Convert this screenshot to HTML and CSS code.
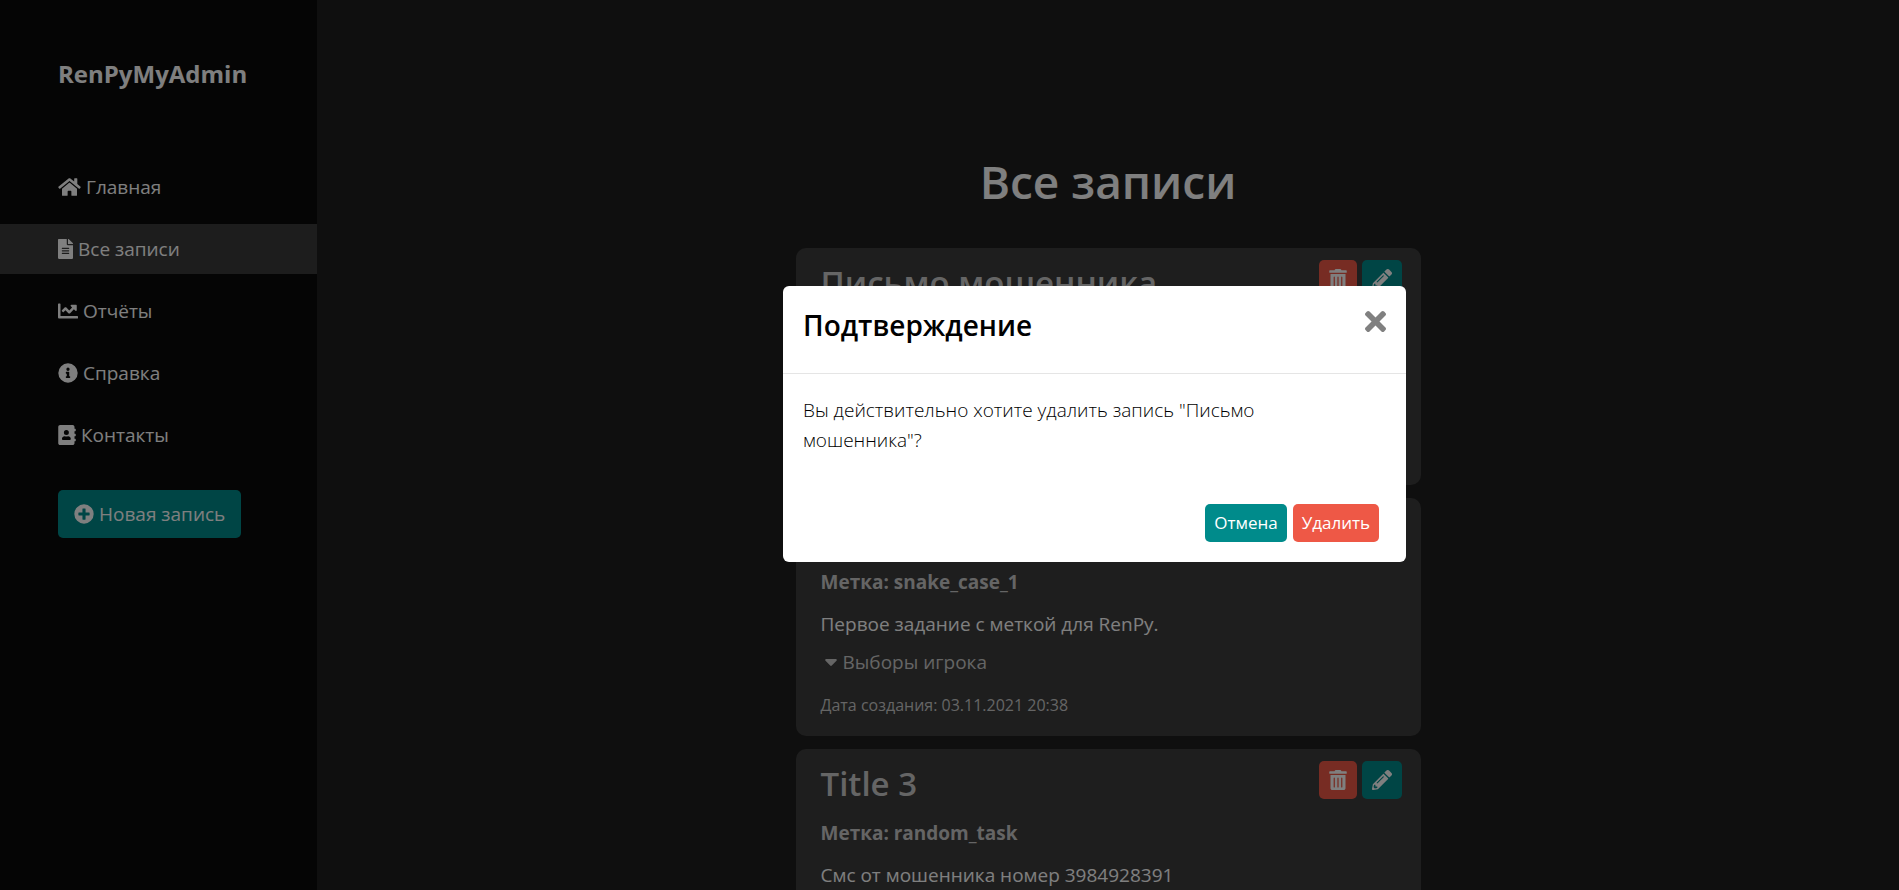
FILE: index.html
```html
<!DOCTYPE html>
<html lang="ru">
<head>
<meta charset="utf-8">
<title>RenPyMyAdmin</title>
<link rel="stylesheet" href="styles.css">
</head>
<body>
<svg class="sprite" aria-hidden="true">
  <symbol id="home" viewBox="0 0 576 512"><path d="M280 148 96 300v164c0 9 7 16 16 16h112c9 0 16-7 16-16v-96c0-9 7-16 16-16h64c9 0 16 7 16 16v96c0 9 7 16 16 16h112c9 0 16-7 16-16V300L296 148c-5-4-11-4-16 0zM572 251l-84-69V44c0-7-5-12-12-12h-56c-7 0-12 5-12 12v73l-90-74c-18-14-43-14-61 0L4 251c-5 4-5 12-1 17l26 31c4 5 12 6 17 2l235-194c4-4 11-4 15 0l235 194c5 4 12 3 17-2l25-31c5-5 4-13-1-17z"/></symbol>
  <symbol id="file" viewBox="0 0 384 512"><path fill-rule="evenodd" d="M224 136V0H24C11 0 0 11 0 24v464c0 13 11 24 24 24h336c13 0 24-11 24-24V160H248c-13 0-24-11-24-24zm64 236c0 7-5 12-12 12H108c-7 0-12-5-12-12v-8c0-7 5-12 12-12h168c7 0 12 5 12 12zm0-64c0 7-5 12-12 12H108c-7 0-12-5-12-12v-8c0-7 5-12 12-12h168c7 0 12 5 12 12zm0-72v8c0 7-5 12-12 12H108c-7 0-12-5-12-12v-8c0-7 5-12 12-12h168c7 0 12 5 12 12zm96-114v6H256V0h6c6 0 12 3 17 7l98 98c4 5 7 11 7 17z"/></symbol>
  <symbol id="chart" viewBox="0 0 512 512"><path d="M496 384H64V80c0-9-7-16-16-16H16C7 64 0 71 0 80v336c0 18 14 32 32 32h464c9 0 16-7 16-16v-32c0-9-7-16-16-16zM464 96H346c-22 0-32 26-17 41l32 32-73 73-73-73c-13-12-33-12-46 0l-69 70c-6 6-6 16 0 22l23 23c6 6 16 6 22 0l47-46 73 73c13 12 33 12 46 0l96-97 32 32c15 15 41 5 41-17V112c0-9-7-16-16-16z"/></symbol>
  <symbol id="info" viewBox="0 0 512 512"><path fill-rule="evenodd" d="M256 8a248 248 0 1 0 0 496 248 248 0 0 0 0-496zm0 110a42 42 0 1 1 0 84 42 42 0 0 1 0-84zm56 254c0 7-5 12-12 12h-88c-7 0-12-5-12-12v-24c0-7 5-12 12-12h12v-64h-12c-7 0-12-5-12-12v-24c0-7 5-12 12-12h64c7 0 12 5 12 12v100h12c7 0 12 5 12 12z"/></symbol>
  <symbol id="contacts" viewBox="0 0 448 512"><path fill-rule="evenodd" d="M436 160c7 0 12-5 12-12v-40c0-7-5-12-12-12h-20V48c0-26-22-48-48-48H48C22 0 0 22 0 48v416c0 26 22 48 48 48h320c26 0 48-22 48-48v-48h20c7 0 12-5 12-12v-40c0-7-5-12-12-12h-20v-64h20c7 0 12-5 12-12v-40c0-7-5-12-12-12h-20v-64zm-228-32a64 64 0 1 1 0 128 64 64 0 0 1 0-128zm112 237c0 11-10 19-22 19H118c-12 0-22-8-22-19v-19c0-32 30-58 67-58h5c25 11 55 11 80 0h5c37 0 67 26 67 58z"/></symbol>
  <symbol id="plus" viewBox="0 0 512 512"><path fill-rule="evenodd" d="M256 8a248 248 0 1 0 0 496 248 248 0 0 0 0-496zm144 276c0 7-5 12-12 12h-92v92c0 7-5 12-12 12h-56c-7 0-12-5-12-12v-92h-92c-7 0-12-5-12-12v-56c0-7 5-12 12-12h92v-92c0-7 5-12 12-12h56c7 0 12 5 12 12v92h92c7 0 12 5 12 12z"/></symbol>
  <symbol id="trash" viewBox="0 0 448 512"><path fill-rule="evenodd" d="M32 464c0 26 22 48 48 48h288c26 0 48-22 48-48V128H32zm272-256c0-21 32-21 32 0v224c0 21-32 21-32 0zm-96 0c0-21 32-21 32 0v224c0 21-32 21-32 0zm-96 0c0-21 32-21 32 0v224c0 21-32 21-32 0zM432 32H312l-9-19c-4-8-12-13-22-13H167c-9 0-18 5-22 13l-9 19H16C7 32 0 39 0 48v32c0 9 7 16 16 16h416c9 0 16-7 16-16V48c0-9-7-16-16-16z"/></symbol>
  <symbol id="pencil" viewBox="0 0 512 512"><path fill-rule="evenodd" d="m498 142-46 46c-5 5-13 5-17 0L324 77c-5-5-5-12 0-17l46-46c19-19 49-19 68 0l60 60c19 19 19 49 0 68zM284 100 22 362 0 484c-3 16 12 31 28 28l122-21 262-263c5-4 5-12 0-17L301 100c-5-5-12-5-17 0zM124 340c-6-6-6-15 0-20l154-154c5-5 14-5 20 0s6 15 0 20L144 340c-5 5-14 5-20 0zm-36 84h48v36l-65 12-31-32 12-64h36z"/></symbol>
  <symbol id="caret" viewBox="0 0 320 192"><path d="M31 0h258c27 0 40 32 21 51L181 180c-12 12-31 12-43 0L10 51C-9 32 4 0 31 0z"/></symbol>
  <symbol id="times" viewBox="0 0 352 352"><path d="m243 176 100-100c12-12 12-32 0-44L321 10c-13-13-33-13-45 0L176 110 76 10C64-3 44-3 32 10L9 32c-12 12-12 32 0 44l101 100L9 276c-12 12-12 32 0 44l23 23c12 12 32 12 44 0l100-101 100 101c12 12 32 12 45 0l22-23c12-12 12-32 0-44z"/></symbol>
</svg>

<div class="layout">
  <aside class="sidebar">
    <a class="brand" href="#">RenPyMyAdmin</a>
    <nav class="menu">
      <a class="menu-link" href="#"><svg class="icon w23"><use href="#home"/></svg>Главная</a>
      <a class="menu-link active" href="#"><svg class="icon w15"><use href="#file"/></svg>Все записи</a>
      <a class="menu-link" href="#"><svg class="icon w20"><use href="#chart"/></svg>Отчёты</a>
      <a class="menu-link" href="#"><svg class="icon w20"><use href="#info"/></svg>Справка</a>
      <a class="menu-link" href="#"><svg class="icon w18"><use href="#contacts"/></svg>Контакты</a>
    </nav>
    <a class="new-record" href="#"><svg class="icon w20"><use href="#plus"/></svg>Новая запись</a>
  </aside>

  <main class="content">
    <h1 class="page-title">Все записи</h1>
    <div class="records">
      <article class="card">
        <header class="card-head">
          <h2 class="card-title">Письмо мошенника</h2>
          <div class="actions">
            <button class="btn danger" aria-label="Удалить"><svg class="icon w18"><use href="#trash"/></svg></button>
            <button class="btn primary" aria-label="Изменить"><svg class="icon w20"><use href="#pencil"/></svg></button>
          </div>
        </header>
        <div class="card-space"></div>
      </article>
      <article class="card">
        <header class="card-head">
          <div class="card-title"></div>
        </header>
        <p class="label">Метка: snake_case_1</p>
        <p class="text">Первое задание с меткой для RenPy.</p>
        <button class="choices"><svg class="caret"><use href="#caret"/></svg>Выборы игрока</button>
        <p class="date">Дата создания: 03.11.2021 20:38</p>
      </article>
      <article class="card">
        <header class="card-head">
          <h2 class="card-title">Title 3</h2>
          <div class="actions">
            <button class="btn danger" aria-label="Удалить"><svg class="icon w18"><use href="#trash"/></svg></button>
            <button class="btn primary" aria-label="Изменить"><svg class="icon w20"><use href="#pencil"/></svg></button>
          </div>
        </header>
        <p class="label">Метка: random_task</p>
        <p class="text">Смс от мошенника номер 3984928391</p>
      </article>
    </div>
  </main>
</div>

<div class="backdrop">
  <div class="modal" role="dialog" aria-modal="true" aria-labelledby="modal-title">
    <header class="modal-head">
      <h2 class="modal-title" id="modal-title">Подтверждение</h2>
      <button class="close" aria-label="Закрыть"><svg class="times"><use href="#times"/></svg></button>
    </header>
    <p class="modal-text">Вы действительно хотите удалить запись "Письмо мошенника"?</p>
    <footer class="modal-foot">
      <button class="btn primary">Отмена</button>
      <button class="btn danger">Удалить</button>
    </footer>
  </div>
</div>
</body>
</html>
```

FILE: styles.css
```css
* { box-sizing: border-box; }
html, body { height: 100%; }
body {
  margin: 0;
  overflow: hidden;
  background: #1e1e1e;
  color: #fff;
  font: 19px/30px "Open Sans", "Noto Sans", sans-serif;
}
h1, h2, p { margin: 0; }
a { color: inherit; text-decoration: none; }
button { border: 0; font: inherit; cursor: pointer; }
.sprite { display: none; }
.icon { display: block; height: 20px; fill: currentColor; flex: none; }
.w15 { width: 15px; }
.w18 { width: 18px; }
.w20 { width: 20px; }
.w23 { width: 23px; }

.layout { display: flex; height: 100%; }
.sidebar { flex: none; width: 317px; background: #0a0a0a; }
.brand {
  display: block;
  padding: 56px 58px 0;
  font-size: 24px;
  line-height: 36px;
  font-weight: 700;
}
.menu { display: flex; flex-direction: column; gap: 12px; margin-top: 70px; }
.menu-link {
  display: flex;
  align-items: center;
  gap: 5px;
  height: 50px;
  padding: 0 58px;
}
.menu-link.active { background: #3a3a3a; }
.new-record {
  display: inline-flex;
  align-items: center;
  gap: 5px;
  height: 48px;
  margin: 30px 58px;
  padding: 0 16px;
  border-radius: 5px;
  background: #008b8b;
}

.content { flex: 1; padding: 143px 24px 0; overflow: hidden; }
.page-title { text-align: center; font-size: 46px; line-height: 76px; font-weight: 600; }
.records {
  display: flex;
  flex-direction: column;
  gap: 13px;
  max-width: 625px;
  margin: 29px auto 0;
}
.card { padding: 12px 19px 16px 25px; border-radius: 10px; background: #3c3c3c; color: #cacaca; }
.card-head { display: flex; justify-content: space-between; align-items: flex-start; }
.card-title { min-height: 46px; font-size: 33px; line-height: 46px; font-weight: 600; }
.card-space { height: 163px; }
.actions { display: flex; gap: 5px; }
.btn {
  display: flex;
  align-items: center;
  justify-content: center;
  height: 38px;
  padding: 0 10px;
  border-radius: 5px;
  color: #fff;
  font-size: 17px;
}
.primary { background: #008b8b; }
.danger { background: #ee5846; }
.label { margin-top: 11px; font-weight: 700; }
.text { margin-top: 12px; color: #fff; }
.choices {
  display: flex;
  align-items: center;
  gap: 6px;
  margin-top: 8px;
  padding: 0 4px;
  background: none;
  color: #cacaca;
}
.caret { width: 12px; height: 7px; fill: currentColor; }
.date { margin-top: 13px; font-size: 16px; }

.backdrop {
  position: fixed;
  inset: 0;
  padding: 286px 0 0 290px;
  background: rgba(0, 0, 0, .5);
}
.modal {
  max-width: 623px;
  margin: 0 auto;
  border-radius: 6px;
  background: #fff;
  color: #000;
}
.modal-head {
  display: flex;
  justify-content: space-between;
  align-items: flex-start;
  padding: 20px 20px 28px;
  border-bottom: 1px solid #e5e5e5;
}
.modal-title { font-size: 28px; line-height: 39px; font-weight: 600; }
.close { padding: 5px 0 0; background: none; color: #808080; }
.times { display: block; width: 21px; height: 21px; fill: currentColor; }
.modal-text { padding: 21px 100px 49px 20px; font-weight: 300; }
.modal-foot { display: flex; justify-content: flex-end; gap: 6px; padding: 0 27px 20px; }
.modal-foot .btn { padding: 0 9px; }
```
